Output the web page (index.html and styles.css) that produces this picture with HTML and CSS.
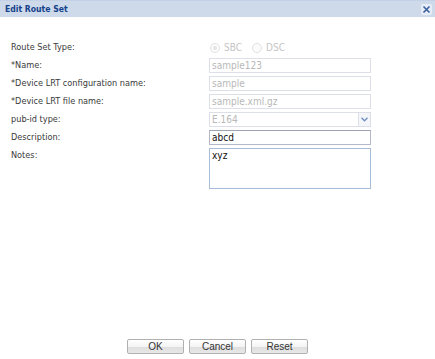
FILE: index.html
```html
<!DOCTYPE html>
<html lang="en">
<head>
    <meta charset="UTF-8">
    <title>Edit Route Set</title>
    <link rel="stylesheet" href="styles.css">
</head>
<body>

<div class="window">
    <div class="window-header">
        <span class="window-title">Edit Route Set</span>
        <span class="tool-close">
            <svg width="9" height="9" viewBox="0 0 9 9">
                <path d="M1.5 1.5 L7.5 7.5 M7.5 1.5 L1.5 7.5" stroke="#3a5f9e" stroke-width="1.6" fill="none"/>
            </svg>
        </span>
    </div>

    <!-- form fields -->
    <div class="form">
        <label class="field-label">Route Set Type:</label>
        <div class="radio-group">
            <span class="radio checked"></span><span class="radio-text">SBC</span>
            <span class="radio"></span><span class="radio-text">DSC</span>
        </div>

        <label class="field-label">*Name:</label>
        <input class="text-field disabled" type="text" value="sample123" disabled>

        <label class="field-label">*Device LRT configuration name:</label>
        <input class="text-field disabled" type="text" value="sample" disabled>

        <label class="field-label">*Device LRT file name:</label>
        <input class="text-field disabled" type="text" value="sample.xml.gz" disabled>

        <label class="field-label">pub-id type:</label>
        <div class="combo">
            <input class="text-field disabled combo-input" type="text" value="E.164" disabled>
            <span class="combo-trigger">
                <svg width="7" height="5" viewBox="0 0 7 5">
                    <path d="M0.5 0.8 L3.5 3.8 L6.5 0.8" stroke="#6d8fc0" stroke-width="1.3" fill="none"/>
                </svg>
            </span>
        </div>

        <label class="field-label">Description:</label>
        <input class="text-field" type="text" value="abcd">

        <label class="field-label">Notes:</label>
        <textarea class="text-area">xyz</textarea>
    </div>

    <!-- buttons -->
    <div class="footer">
        <button class="btn">OK</button>
        <button class="btn">Cancel</button>
        <button class="btn">Reset</button>
    </div>
</div>

</body>
</html>
```

FILE: styles.css
```css
body {
    margin: 0;
    background-color: #fff;
    font-family: "DejaVu Sans Condensed", "DejaVu Sans", sans-serif;
    font-size: 10px;
    color: #222;
}

.window {
    width: 435px;
    height: 359px;
    display: flex;
    flex-direction: column;
}

.window-header {
    height: 17px;
    background-color: #cedaea;
    border-top: 1px solid #c2d1e5;
    box-sizing: border-box;
    display: flex;
    align-items: center;
    justify-content: space-between;
    padding: 0 3px 0 5px;
}

.window-title {
    color: #15428b;
    font-weight: bold;
    font-size: 8.6px;
}

.tool-close {
    width: 11px;
    height: 11px;
    background-color: #e6edf7;
    border-radius: 2px;
    display: flex;
    align-items: center;
    justify-content: center;
}

.form {
    display: grid;
    grid-template-columns: 198px 162px;
    grid-auto-rows: 15px;
    row-gap: 3px;
    padding: 23px 0 0 11px;
}

.field-label {
    line-height: 15px;
    font-size: 9.1px;
    color: #3a3a3a;
}

.radio-group {
    display: flex;
    align-items: center;
    color: #c4c4c4;
}

.radio {
    width: 8px;
    height: 8px;
    border: 1px solid #e2e2e2;
    border-radius: 50%;
    background-color: #fbfbfb;
    position: relative;
    margin: 0 4px 0 1px;
}

.radio.checked::after {
    content: "";
    position: absolute;
    left: 2px;
    top: 2px;
    width: 4px;
    height: 4px;
    border-radius: 50%;
    background-color: #e4e4e4;
}

.radio-text {
    margin-right: 9px;
}

.text-field {
    box-sizing: border-box;
    width: 162px;
    height: 15px;
    margin: 0;
    padding: 0 2px;
    border: 1px solid #b5b8c8;
    border-top-color: #9da1b3;
    font-family: inherit;
    font-size: 10px;
    color: #111;
    background-color: #fff;
}

.text-field.disabled {
    border-color: #dcdfe8;
    color: #b8b8b8;
    background-color: #fff;
}

.combo {
    display: flex;
}

.combo-input {
    width: 149px;
    border-right: none;
}

.combo-trigger {
    box-sizing: border-box;
    width: 13px;
    height: 15px;
    border: 1px solid #dcdfe8;
    background-color: #f4f6fa;
    display: flex;
    align-items: center;
    justify-content: center;
}

.text-area {
    box-sizing: border-box;
    grid-row: span 3;
    width: 162px;
    height: 41px;
    margin: 0;
    padding: 1px 2px;
    border: 1px solid #a7bcd8;
    font-family: inherit;
    font-size: 10px;
    color: #111;
    resize: none;
}

.footer {
    margin-top: auto;
    padding-bottom: 5px;
    display: flex;
    justify-content: center;
    gap: 5px;
}

.btn {
    width: 57px;
    height: 15px;
    padding: 0;
    border: 1px solid #b0b0b0;
    border-radius: 2px;
    background: linear-gradient(#ffffff 0%, #f3f3f3 55%, #dedede 56%, #e8e8e8 100%);
    font-family: "Liberation Sans", Arial, sans-serif;
    font-size: 10px;
    color: #333;
}
```
